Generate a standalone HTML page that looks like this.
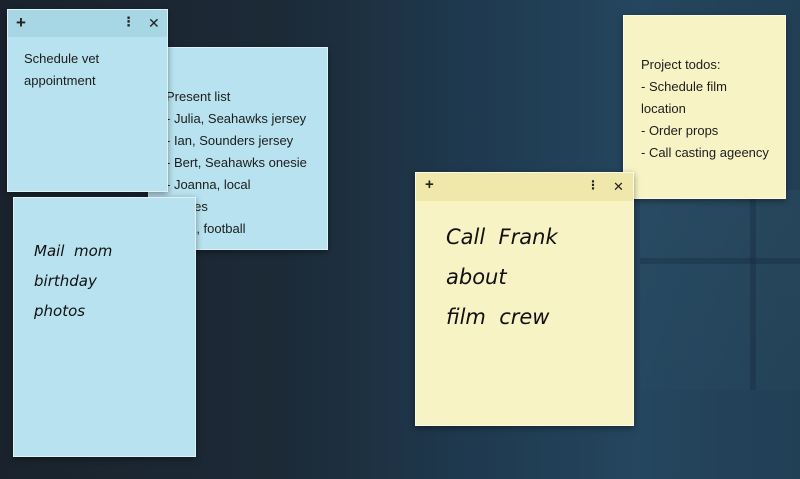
<!DOCTYPE html>
<html><head><style>
*{margin:0;padding:0;box-sizing:border-box}
body{width:800px;height:479px;overflow:hidden;position:relative;font-family:"Liberation Sans","DejaVu Sans",sans-serif;
background:linear-gradient(90deg,#1a232d 0%,#1c2a37 35%,#1f3a50 60%,#24465e 80%,#223f55 100%);}
.bg1{position:absolute;left:640px;top:190px;width:160px;height:200px;background:linear-gradient(180deg,rgba(60,100,120,.18),rgba(50,90,110,.1));}
.bar{position:absolute;background:rgba(20,38,52,.3)}
.n{position:absolute;border:1px solid rgba(255,255,255,.55);box-shadow:0 2px 6px rgba(0,0,0,.4)}
.b{background:#b8e2ef}.y{background:#f7f3c5}
.h{position:absolute;left:0;right:0;top:0;height:27px;font-size:17px;color:#222;font-weight:bold}
.hb{background:#a7d6e5}.hy{background:#efe8aa}
.h span{position:absolute;top:3px}
.t{position:absolute;font-size:13px;line-height:22px;color:#1c1c1c;white-space:nowrap}
.hw{position:absolute;font-family:"DejaVu Sans",sans-serif;font-weight:300;color:#111;white-space:nowrap;font-style:italic}
</style></head><body>
<div class="bg1"></div>
<div class="bar" style="left:750px;top:190px;width:6px;height:200px"></div>
<div class="bar" style="left:640px;top:258px;width:160px;height:6px"></div>

<div class="n b" style="left:148px;top:47px;width:180px;height:203px;overflow:hidden">
<div class="t" style="left:17px;top:38px">Present list<br>- Julia, Seahawks jersey<br>- Ian, Sounders jersey<br>- Bert, Seahawks onesie<br>- Joanna, local<br>&nbsp; plates<br>- Erik, football<br>- ...</div></div>

<div class="n b" style="left:7px;top:9px;width:161px;height:183px">
<div class="h hb"><span style="left:8px">+</span><span style="left:114px;font-size:13px;top:4px">⋮</span><span style="left:140px;font-size:14px;top:5px">✕</span></div>
<div class="t" style="left:16px;top:38px">Schedule vet<br>appointment</div></div>

<div class="n b" style="left:13px;top:197px;width:183px;height:260px">
<div class="hw" style="left:20px;top:38px;font-size:15px;line-height:30px">Mail&nbsp; mom<br>birthday<br>photos</div></div>

<div class="n y" style="left:623px;top:15px;width:163px;height:184px">
<div class="t" style="left:17px;top:38px">Project todos:<br>- Schedule film<br>location<br>- Order props<br>- Call casting ageency</div></div>

<div class="n y" style="left:415px;top:172px;width:219px;height:254px">
<div class="h hy" style="height:28px"><span style="left:9px;font-size:15px">+</span><span style="left:171px;font-size:12px;top:5px">⋮</span><span style="left:197px;font-size:13px;top:6px">✕</span></div>
<div class="hw" style="left:30px;top:44px;font-size:21px;line-height:40px">Call&nbsp; Frank<br>about<br>film&nbsp; crew</div></div>
</body></html>
